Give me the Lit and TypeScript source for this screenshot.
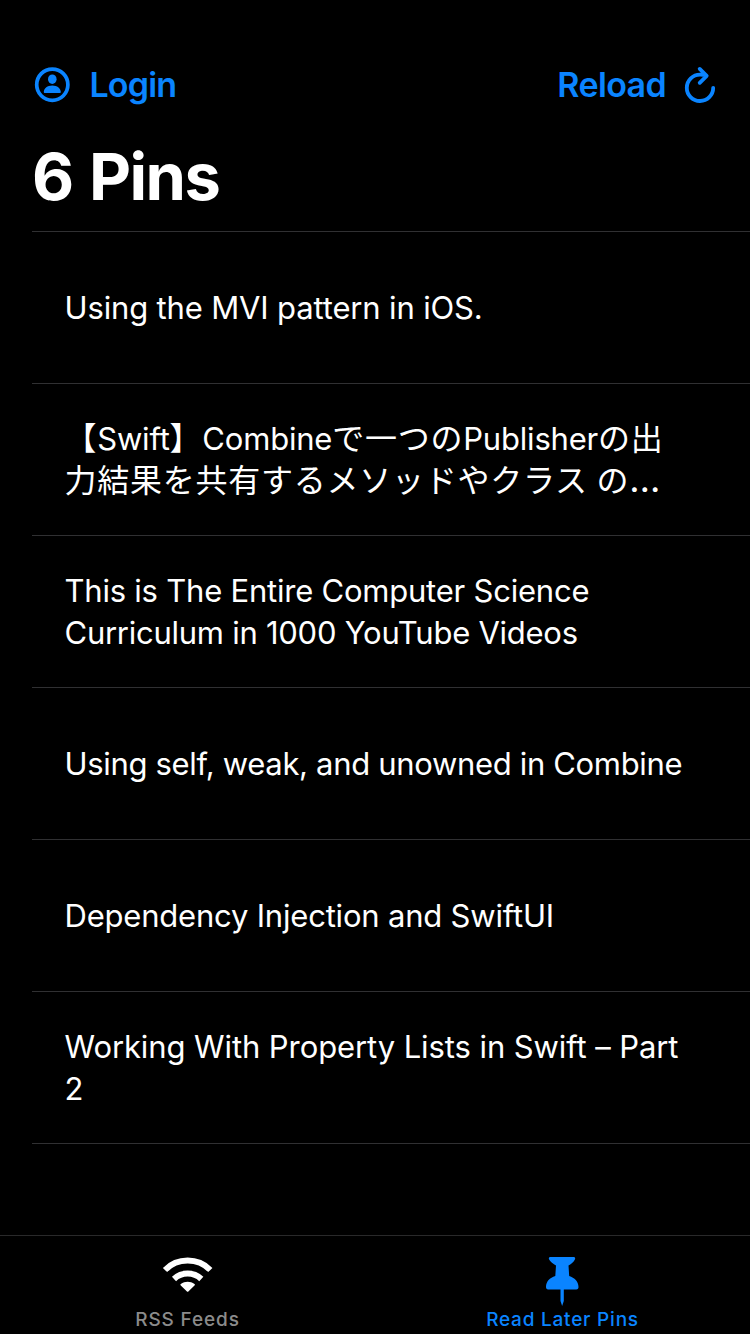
import { LitElement, html, css } from "lit";
import { customElement } from "lit/decorators.js";

interface Line { text: string; tracking: number; }

const pins: Line[][] = [
  [{ text: "Using the MVI pattern in iOS.", tracking: -0.15 }],
  [{ text: "【Swift】Combineで一つのPublisherの出", tracking: -0.2 }, { text: "力結果を共有するメソッドやクラス の…", tracking: 0 }],
  [{ text: "This is The Entire Computer Science", tracking: -0.22 }, { text: "Curriculum in 1000 YouTube Videos", tracking: -0.26 }],
  [{ text: "Using self, weak, and unowned in Combine", tracking: -0.33 }],
  [{ text: "Dependency Injection and SwiftUI", tracking: -0.2 }],
  [{ text: "Working With Property Lists in Swift – Part", tracking: -0.09 }, { text: "2", tracking: 0 }],
];

/** Splits a title into Latin, Japanese and ellipsis runs, which are set at different sizes. */
const runs = (text: string) => text.match(/…|[\u3000-\u9fff]+|[^\u3000-\u9fff…]+/g) ?? [];
const runClass = (run: string) =>
  run === "…" ? "ellipsis" : /[\u3000-\u9fff]/.test(run) ? "ja" : "latin";

@customElement("app-root")
export class AppRoot extends LitElement {
  static styles = css`
    :host { display: flex; flex-direction: column; width: 750px; height: 1334px; box-sizing: border-box; background: #000; color: #fff; font-family: Inter, "Noto Sans CJK JP", sans-serif; overflow: hidden; }
    * { box-sizing: border-box; }
    nav { display: flex; justify-content: space-between; height: 88px; margin-top: 40px; padding: 0 34px; align-items: center; color: #0a84ff; font-size: 34px; font-weight: 600; flex: none; }
    .action { display: flex; align-items: center; }
    .login { gap: 19.5px; letter-spacing: -0.85px; }
    .reload { gap: 18px; letter-spacing: -0.65px; }
    svg { display: block; flex: none; overflow: visible; }
    h1 { margin: 0; height: 103px; padding: 9px 32px 0; font-size: 65px; line-height: 80px; font-weight: 700; letter-spacing: -1.6px; word-spacing: 2.6px; flex: none; }
    ul { list-style: none; margin: 0 0 0 32px; padding: 0; border-top: 1px solid #303032; flex: 1; }
    li { height: 152px; border-bottom: 1px solid #303032; padding-left: 32.5px; display: flex; flex-direction: column; justify-content: center; font-size: 31px; line-height: 42px; }
    .line { white-space: pre; height: 42px; }
    .ja { font-size: 32px; line-height: 1; letter-spacing: 0.75px; font-family: "Noto Sans CJK JP", sans-serif; font-weight: 400; }
    .ellipsis { font-size: 36px; line-height: 1; }
    footer { height: 99px; flex: none; border-top: 1px solid #29292a; display: grid; grid-template-columns: 1fr 1fr; }
    .tab { display: flex; flex-direction: column; align-items: center; font-size: 19px; font-weight: 500; line-height: 24px; color: #8b8b8b; letter-spacing: .87px; }
    .tab.active { color: #0a84ff; letter-spacing: .78px; }
    .glyph { height: 72px; display: flex; align-items: flex-start; padding-top: 20px; }
  `;

  render() {
    return html`
      <nav>
        <div class="action login">
          <svg width="36" height="36" viewBox="0 0 36 36"><circle cx="18.300" cy="18.700" r="15.600" fill="none" stroke="#0a84ff" stroke-width="3.700"/><ellipse cx="18.300" cy="13.200" rx="4.300" ry="4.800" fill="#0a84ff"/><path d="M11 27c-.8 0-1.300-.4-1.200-1.200.4-3.500 3.500-6.300 8.500-6.300s8.100 2.800 8.500 6.300c.1.8-.4 1.200-1.200 1.200z" fill="#0a84ff"/></svg>
          <span>Login</span>
        </div>
        <div class="action reload"><span>Reload</span>
          <svg width="32" height="38" viewBox="0 0 32 38"><path d="M22.500 10.800C20.500 10 18.500 9.600 16.200 9.600A13.200 13.200 0 1 0 29.200 22.800M15.700 3.900l7 6.900-7 7" fill="none" stroke="#0a84ff" stroke-width="3.800" stroke-linecap="round" stroke-linejoin="round"/></svg>
        </div>
      </nav>
      <h1>6 Pins</h1>
      <ul>${pins.map(p => html`<li>${p.map(l => html`<div class="line" style="letter-spacing:${l.tracking}px">${runs(l.text).map(r => html`<span class=${runClass(r)}>${r}</span>`)}</div>`)}</li>`)}</ul>
      <footer>
        <div class="tab"><div class="glyph"><svg width="50" height="37" viewBox="0 0 50 37"><g fill="none" stroke="#fff" stroke-width="6"><path d="M2 14A32 32 0 0 1 47.300 14M11 23A20 20 0 0 1 38.300 23"/></g><path d="M17.800 29.600c-.6-.6-.5-1.100 0-1.500 4.200-3.200 9.500-3.200 13.700 0 .5.4.6.9 0 1.500l-5.900 5.600c-.7.7-1.200.7-1.900 0z" fill="#fff"/></svg></div>RSS Feeds</div>
        <div class="tab active"><div class="glyph"><svg width="36" height="50" viewBox="0 0 36 50"><path d="M5.500 1h23c1.500 0 1.900 1 1.500 2.200-1 2.600-4.500 5-6.500 6.300l.7 10.500c5.300 1.700 9.300 5.500 9.300 11 0 1.600-.7 2.500-2.200 2.500H3.200C1.700 33.500 1 32.600 1 31 1 25.500 4.800 21.700 10.300 20L11 9.500C8.500 7.800 5 5.600 4 3.200 3.600 2 4 1 5.500 1zM15.500 33h3.300v12L17.150 50l-1.650-5z" fill="#0a84ff"/></svg></div>Read Later Pins</div>
      </footer>`;
  }
}
